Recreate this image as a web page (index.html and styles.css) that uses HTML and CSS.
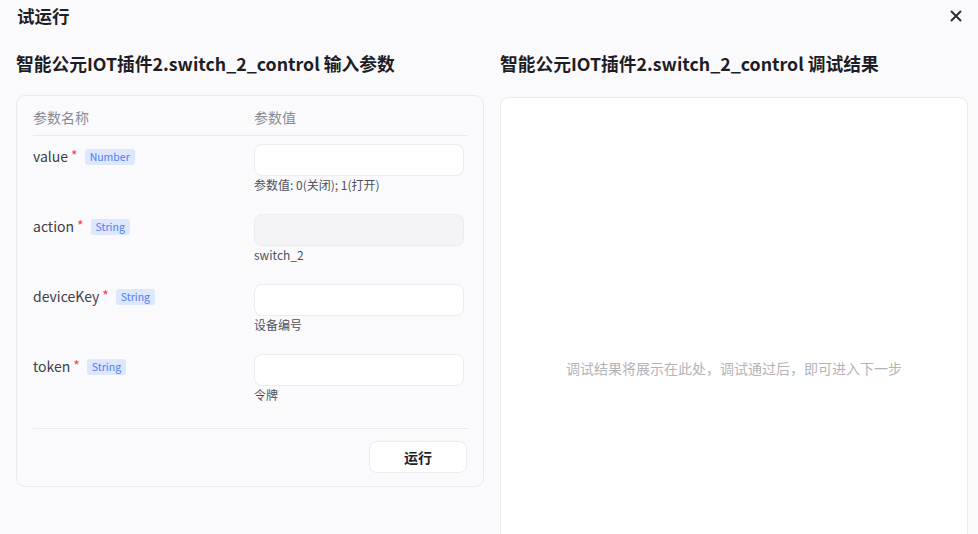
FILE: index.html
```html
<!DOCTYPE html>
<html lang="zh-CN">
<head>
<meta charset="utf-8">
<title>试运行</title>
<link rel="stylesheet" href="styles.css">
</head>
<body>
<div class="dialog">
  <header class="top">
    <div class="title">试运行</div>
    <svg class="close" viewBox="0 0 12 12" width="12" height="12"><path d="M1.5 1.5 L10.5 10.5 M10.5 1.5 L1.5 10.5" stroke="#2b2b38" stroke-width="1.9" stroke-linecap="round" fill="none"/></svg>
  </header>
  <div class="cols">
    <section class="col">
      <h2 class="heading">智能公元IOT插件2.switch_2_control 输入参数</h2>
      <div class="card">
        <div class="grid head">
          <div>参数名称</div>
          <div>参数值</div>
        </div>
        <div class="rows">
          <div class="grid row">
            <div class="name">value<span class="req">*</span><span class="tag">Number</span></div>
            <div class="val"><div class="input"></div><div class="help">参数值: 0(关闭); 1(打开)</div></div>
          </div>
          <div class="grid row">
            <div class="name">action<span class="req">*</span><span class="tag">String</span></div>
            <div class="val"><div class="input disabled"></div><div class="help">switch_2</div></div>
          </div>
          <div class="grid row">
            <div class="name">deviceKey<span class="req">*</span><span class="tag">String</span></div>
            <div class="val"><div class="input"></div><div class="help">设备编号</div></div>
          </div>
          <div class="grid row">
            <div class="name">token<span class="req">*</span><span class="tag">String</span></div>
            <div class="val"><div class="input"></div><div class="help">令牌</div></div>
          </div>
        </div>
        <div class="foot">
          <button class="run">运行</button>
        </div>
      </div>
    </section>
    <section class="col">
      <h2 class="heading">智能公元IOT插件2.switch_2_control 调试结果</h2>
      <div class="card result">
        <div class="placeholder">调试结果将展示在此处，调试通过后，即可进入下一步</div>
      </div>
    </section>
  </div>
</div>
</body>
</html>
```

FILE: styles.css
```css
* { box-sizing: border-box; }
html, body { margin: 0; padding: 0; }
body {
  background: #fafafc;
  font-family: "Noto Sans CJK SC", "Noto Sans", sans-serif;
  color: #1f1f28;
  overflow: hidden;
}
.dialog {
  padding: 0 10px 0 16px;
  height: 534px;
  overflow: hidden;
}
.top {
  display: flex;
  align-items: center;
  justify-content: space-between;
  height: 31px;
  padding: 0 6px 0 1px;
}
.title {
  font-size: 17.5px;
  font-weight: 600;
  color: #1f1f28;
  line-height: 24px;
}
.close { display: block; }
.cols {
  display: grid;
  grid-template-columns: 468px 468px;
  gap: 16px;
}
.heading {
  margin: 19px 0 0 0;
  font-size: 17.75px;
  font-weight: 600;
  line-height: 26px;
  height: 26px;
  color: #1d1d26;
}
.card {
  margin-top: 19px;
  border: 1px solid #e9e9ee;
  border-radius: 9px;
  padding: 0 16px;
}
.grid {
  display: grid;
  grid-template-columns: 221px 1fr;
}
.head {
  font-size: 14px;
  color: #8a8a93;
  line-height: 22px;
  padding: 10px 0 7px;
  border-bottom: 1px solid #e8e8ed;
}
.row {
  height: 70px;
  padding-top: 8px;
}
.name {
  font-size: 14px;
  color: #3f3f48;
  line-height: 22px;
  padding-top: 1px;
  display: flex;
  align-items: flex-start;
}
.req {
  color: #f53f3f;
  font-size: 14px;
  margin-left: 3px;
  line-height: 21px;
}
.tag {
  margin-left: 7px;
  margin-top: 4px;
  height: 16px;
  line-height: 16px;
  padding: 0 5px;
  font-size: 10.5px;
  color: #4d7ef7;
  background: #dde7fe;
  border-radius: 3px;
}
.val { padding-right: 3px; }
.input {
  height: 32px;
  background: #fff;
  border: 1px solid #ebebf0;
  border-radius: 8px;
}
.input.disabled { background: #f4f4f6; }
.help {
  font-size: 12px;
  line-height: 18px;
  color: #50505a;
}
.foot {
  margin-top: 12px;
  border-top: 1px solid #e8e8ed;
  padding: 12px 0 13px;
  display: flex;
  justify-content: flex-end;
}
.run {
  width: 98px;
  height: 32px;
  background: #fff;
  border: 1px solid #ebebf0;
  border-radius: 8px;
  font-family: inherit;
  font-size: 14px;
  font-weight: 600;
  color: #1f1f28;
  cursor: pointer;
}
.result {
  margin-top: 21px;
  background: #fff;
  height: 542px;
  display: flex;
  align-items: center;
  justify-content: center;
}
.placeholder {
  font-size: 14px;
  color: #b3b3ba;
}
```
